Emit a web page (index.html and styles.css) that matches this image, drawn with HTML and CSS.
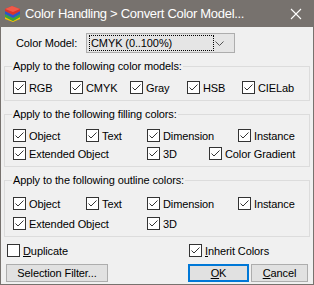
FILE: index.html
```html
<!DOCTYPE html>
<html lang="en">

<head>
  <meta charset="UTF-8">
  <title>Color Handling</title>
  <link rel="stylesheet" href="styles.css">
</head>

<body>
  <div class="window">
    <div class="titlebar">
      <svg class="app-icon" width="17" height="17" viewBox="0 0 17 17">
        <polygon points="1,12 9,16 16,12 16,14 9,17 1,14" fill="#f2c500" />
        <polygon points="1,9 9,13 16,9 16,12 9,16 1,12" fill="#3aa53a" />
        <polygon points="1,6 9,10 16,6 16,9 9,13 1,9" fill="#2c55c8" />
        <polygon points="1,4 8,1 16,4 16,6 9,10 1,6" fill="#d9322b" />
        <polygon points="1,4 8,1 16,4 9,7" fill="#ef5a4a" />
      </svg>
      <span class="title">Color Handling &gt; Convert Color Model...</span>
      <svg class="close" width="12" height="12" viewBox="0 0 12 12">
        <path d="M1 1 L11 11 M11 1 L1 11" stroke="#fff" stroke-width="1.1" />
      </svg>
    </div>

    <div class="content">
      <div class="model-row">
        <span class="model-label">Color Model:</span>
        <div class="select">
          <span class="select-value">CMYK (0..100%)</span>
          <svg class="chevron" width="9" height="5" viewBox="0 0 9 5">
            <path d="M0.5 0.5 L4.5 4.5 L8.5 0.5" fill="none" stroke="#555" />
          </svg>
        </div>
      </div>

      <!-- Color models -->
      <fieldset class="group">
        <legend>Apply to the following color models:</legend>
        <div class="checks models">
          <label class="check"><span class="box on"></span>RGB</label>
          <label class="check"><span class="box on"></span>CMYK</label>
          <label class="check"><span class="box on"></span>Gray</label>
          <label class="check"><span class="box on"></span>HSB</label>
          <label class="check"><span class="box on"></span>CIELab</label>
        </div>
      </fieldset>

      <!-- Filling colors -->
      <fieldset class="group">
        <legend>Apply to the following filling colors:</legend>
        <div class="checks kinds">
          <label class="check"><span class="box on"></span>Object</label>
          <label class="check"><span class="box on"></span>Text</label>
          <label class="check span-dim"><span class="box on"></span>Dimension</label>
          <label class="check"><span class="box on"></span>Instance</label>
          <label class="check span-ext"><span class="box on"></span>Extended Object</label>
          <label class="check"><span class="box on"></span>3D</label>
          <label class="check span-grad"><span class="box on"></span>Color Gradient</label>
        </div>
      </fieldset>

      <!-- Outline colors -->
      <fieldset class="group">
        <legend>Apply to the following outline colors:</legend>
        <div class="checks kinds outline">
          <label class="check"><span class="box on"></span>Object</label>
          <label class="check"><span class="box on"></span>Text</label>
          <label class="check span-dim"><span class="box on"></span>Dimension</label>
          <label class="check"><span class="box on"></span>Instance</label>
          <label class="check span-ext"><span class="box on"></span>Extended Object</label>
          <label class="check"><span class="box on"></span>3D</label>
        </div>
      </fieldset>

      <div class="options-row">
        <label class="check"><span class="box"></span><u>D</u>uplicate</label>
        <label class="check"><span class="box on"></span><u>I</u>nherit Colors</label>
      </div>

      <div class="buttons-row">
        <button class="btn filter">Selection Filter...</button>
        <div class="btn-group">
          <button class="btn ok"><u>O</u>K</button>
          <button class="btn cancel"><u>C</u>ancel</button>
        </div>
      </div>
    </div>
  </div>
</body>

</html>
```

FILE: styles.css
```css
body {
  margin: 0;
  font-family: "Liberation Sans", Arial, sans-serif;
  font-size: 11px;
  letter-spacing: -0.1px;
  color: #000;
  background: #f0f0f0;
}

.window {
  width: 314px;
  height: 285px;
  box-sizing: border-box;
  border: 1px solid #77726e;
  border-top: none;
  background: #f0f0f0;
  display: flex;
  flex-direction: column;
}

.titlebar {
  height: 27px;
  margin: 0 -1px;
  background: #77726e;
  display: flex;
  align-items: center;
  padding-left: 4px;
  flex: none;
}

.app-icon {
  flex: none;
}

.title {
  margin-left: 4px;
  color: #fff;
  font-size: 13px;
  letter-spacing: -0.3px;
  flex: 1;
  white-space: nowrap;
}

.close {
  margin-right: 12px;
}

.content {
  padding: 6px 3px 0 3px;
  display: flex;
  flex-direction: column;
}

.model-row {
  display: flex;
  align-items: center;
  padding-left: 12px;
  height: 20px;
}

.model-label {
  width: 70px;
  white-space: nowrap;
}

.select {
  width: 149px;
  height: 20px;
  box-sizing: border-box;
  border: 1px solid #adadad;
  background: #e5e5e5;
  display: flex;
  align-items: center;
  justify-content: space-between;
  padding: 0 10px 0 2px;
}

.select-value {
  border: 1px dotted #000;
  width: 122px;
  line-height: 14px;
  padding-left: 1px;
}

/* Group boxes */
.group {
  margin: 6px 0 0 0;
  padding: 6px 8px 5px 8px;
  border: 1px solid #dcdcdc;
  min-width: 0;
}

.group legend {
  padding: 0 1px;
  margin-left: -1px;
  line-height: 15px;
}

.checks {
  display: grid;
  row-gap: 3px;
}

.models {
  grid-template-columns: 57px 60px 57px 55px auto;
}

.kinds {
  grid-template-columns: 73px 61px 62px 29px auto;
}

.outline {
  padding-top: 2px;
  row-gap: 5px;
}

.span-dim {
  grid-column: 3 / 5;
}

.span-ext {
  grid-column: 1 / 3;
}

.span-grad {
  grid-column: 4 / 6;
}

.check {
  display: flex;
  align-items: center;
  height: 15px;
  white-space: nowrap;
}

.box {
  width: 13px;
  height: 13px;
  box-sizing: border-box;
  border: 1px solid #333;
  background: #fff;
  margin-right: 3px;
  flex: none;
}

.box.on {
  background: #fff url("data:image/svg+xml,%3Csvg xmlns='http://www.w3.org/2000/svg' width='11' height='11'%3E%3Cpath d='M1.5 5.5 L4 8 L9.5 2.5' fill='none' stroke='%23333' stroke-width='1'/%3E%3C/svg%3E") no-repeat center;
}

.options-row {
  display: grid;
  grid-template-columns: 182px auto;
  padding: 6px 0 0 3px;
}

.buttons-row {
  display: flex;
  justify-content: space-between;
  align-items: center;
  margin-top: 6px;
  padding: 0 2px 0 2px;
}

.btn-group {
  display: flex;
  gap: 2px;
}

.btn {
  font-family: inherit;
  font-size: 11px;
  letter-spacing: -0.1px;
  height: 18px;
  padding: 0;
  background: #e1e1e1;
  border: 1px solid #adadad;
  color: #000;
}

.filter {
  width: 102px;
}

.ok {
  width: 61px;
  border: 2px solid #0078d7;
}

.cancel {
  width: 57px;
}
```
